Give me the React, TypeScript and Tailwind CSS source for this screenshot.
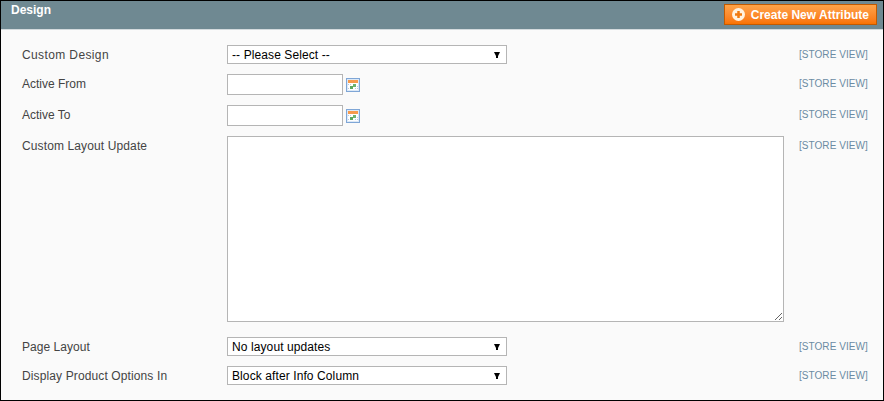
const font = "font-['Liberation_Sans',Arial,sans-serif]";

function StoreView() {
  return <span className="block text-[10px] leading-[14px] tracking-[0.05px] text-[#6b8ba3]">[STORE VIEW]</span>;
}

function CalendarIcon() {
  return (
    <svg width="14" height="14" viewBox="0 0 14 14" className="ml-[3px] mt-[4px]">
      <rect x="0.5" y="0.5" width="13" height="13" fill="#dce9f7" stroke="#7fa6d6" />
      <rect x="2" y="2" width="10" height="3" fill="#f79a4c" />
      <rect x="2" y="5" width="10" height="7" fill="#fff" />
      <path d="M2 6h1v1H2zM4 6h1v1H4zM11 8h1v1h-1zM9 10h1v1H9zM11 10h1v1h-1zM2 10h1v1H2z" fill="#b9cbe0" />
      <rect x="7" y="6" width="3" height="3" fill="#6fb36f" />
      <rect x="4" y="8" width="3" height="3" fill="#5fa85f" />
    </svg>
  );
}

function Select({ value }: { value: string }) {
  return (
    <div className="flex h-[19px] w-[280px] items-center justify-between border border-[#b5b5b5] bg-white pl-1 pr-[6px] text-[12px] tracking-[0.1px] text-black">
      <span>{value}</span>
      <svg width="6" height="6" viewBox="0 0 6 6">
        <path d="M0 0h6L4 4v2H2V4z" fill="#000" />
      </svg>
    </div>
  );
}

function DateInput() {
  return (
    <div className="flex">
      <div className="h-[21px] w-[116px] border border-[#b5b5b5] bg-white" />
      <CalendarIcon />
    </div>
  );
}

function Row({
  label,
  h,
  mb,
  track,
  children,
}: {
  label: string;
  h: string;
  mb: string;
  track: string;
  children: React.ReactNode;
}) {
  return (
    <div className={`flex ${h} ${mb}`}>
      <div className={`w-[205px] pt-[3px] text-[12px] leading-[14px] text-[#444] ${track}`}>{label}</div>
      <div className="w-[572px]">{children}</div>
      <div className="pt-[3px]">
        <StoreView />
      </div>
    </div>
  );
}

export default function App() {
  return (
    <div className={`h-[401px] w-[884px] overflow-hidden border border-black bg-[#fafafa] ${font}`}>
      <div className="flex h-[29px] items-start justify-between border-b border-[#d3dadd] bg-[#6f8992] pl-[10px] pr-[6px]">
        <span className="pt-[2px] text-[12px] font-bold leading-[14px] text-white">Design</span>
        <button className="mt-[3px] flex h-[21px] items-center gap-[6px] border border-[#c25a00] bg-gradient-to-b from-[#ffa347] to-[#f97300] pl-[7px] pr-[7px] text-[12px] font-bold text-white">
          <svg width="13" height="13" viewBox="0 0 13 13">
            <circle cx="6.5" cy="6.5" r="6.5" fill="#fff2e0" />
            <path d="M3 5.25h7v2.5H3zM5.25 3h2.5v7h-2.5z" fill="#f07a10" />
          </svg>
          Create New Attribute
        </button>
      </div>
      <div className="pl-[21px] pt-[15px]">
        <Row label="Custom Design" h="h-[19px]" mb="mb-[10px]" track="tracking-[0.38px]">
          <Select value="-- Please Select --" />
        </Row>
        <Row label="Active From" h="h-[21px]" mb="mb-[10px]" track="tracking-normal">
          <DateInput />
        </Row>
        <Row label="Active To" h="h-[21px]" mb="mb-[10px]" track="tracking-normal">
          <DateInput />
        </Row>
        <Row label="Custom Layout Update" h="h-[186px]" mb="mb-[15px]" track="tracking-[0.12px]">
          <textarea className="block h-[186px] w-[557px] border border-[#b5b5b5] bg-white" />
        </Row>
        <Row label="Page Layout" h="h-[19px]" mb="mb-[10px]" track="tracking-[0.05px]">
          <Select value="No layout updates" />
        </Row>
        <Row label="Display Product Options In" h="h-[19px]" mb="mb-0" track="tracking-[0.12px]">
          <Select value="Block after Info Column" />
        </Row>
      </div>
    </div>
  );
}
